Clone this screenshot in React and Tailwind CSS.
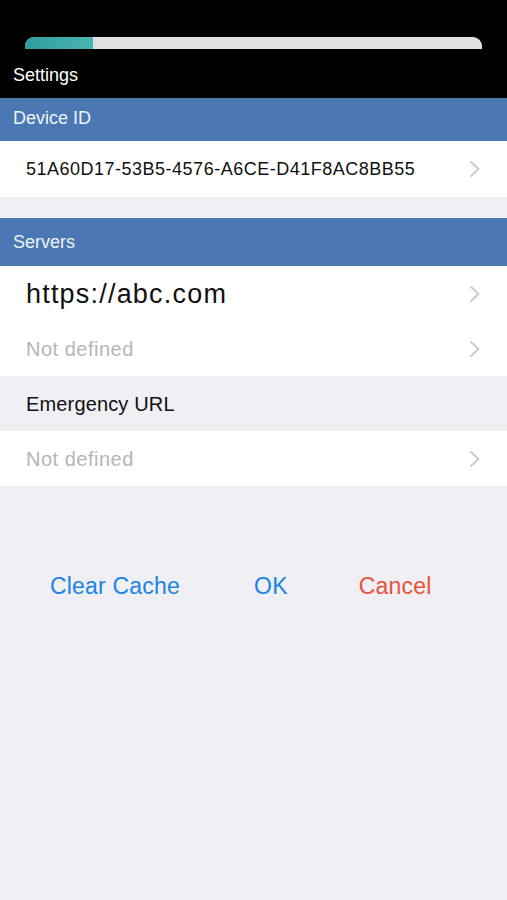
function Chevron() {
  return (
    <svg width="12" height="18" viewBox="0 0 12 18" fill="none" className="shrink-0">
      <polyline points="2,2 9.5,9 2,16" stroke="#c8c8cd" strokeWidth="1.8" strokeLinecap="round" strokeLinejoin="round" />
    </svg>
  );
}

function Row({ children, className = "" }) {
  return (
    <div className={`flex items-center justify-between pl-[26px] pr-[26px] bg-white ${className}`}>
      {children}
      <Chevron />
    </div>
  );
}

export default function App() {
  return (
    <div className="min-h-[900px] w-[507px] bg-[#efeff4] font-['Liberation_Sans',Arial,sans-serif]">
      {/* top bar */}
      <div className="bg-black h-[98px] flex flex-col">
        <div className="mt-[37px] mx-[25px] h-[12px] rounded-t-[9px] bg-[#e1e1e1] overflow-hidden flex">
          <div className="w-[68px] h-full bg-gradient-to-r from-[#2f9c9c] to-[#4bb5b2]" />
        </div>
        <div className="mt-[16px] pl-[13px] text-white text-[18px] leading-[20px]">Settings</div>
      </div>

      {/* device id */}
      <div className="bg-[#4a78b3] h-[43px] flex items-center pb-[3px] pl-[13px] text-[#eef3fa] text-[18px]">Device ID</div>
      <Row className="h-[56px]">
        <span className="text-[18px] text-[#111] tracking-[0.5px]">51A60D17-53B5-4576-A6CE-D41F8AC8BB55</span>
      </Row>

      <div className="h-[21px]" />

      {/* servers */}
      <div className="bg-[#4a78b3] h-[48px] flex items-center pl-[13px] text-[#eef3fa] text-[18px]">Servers</div>
      <Row className="h-[56px]">
        <span className="text-[27px] text-[#111] tracking-[1.2px]">https://abc.com</span>
      </Row>
      <Row className="h-[54px]">
        <span className="text-[20px] text-[#b5b5b8] tracking-[0.5px]">Not defined</span>
      </Row>
      <div className="h-[55px] flex items-center pl-[26px] text-[20px] text-[#111] tracking-[0.15px]">Emergency URL</div>
      <Row className="h-[55px]">
        <span className="text-[20px] text-[#b5b5b8] tracking-[0.5px]">Not defined</span>
      </Row>

      {/* actions */}
      <div className="flex items-center pl-[50px] mt-[83px] text-[23px] tracking-[0.2px]">
        <button className="text-[#1b84e4]">Clear Cache</button>
        <button className="ml-[74px] text-[#1b84e4]">OK</button>
        <button className="ml-[71px] text-[#e8523a]">Cancel</button>
      </div>
    </div>
  );
}
